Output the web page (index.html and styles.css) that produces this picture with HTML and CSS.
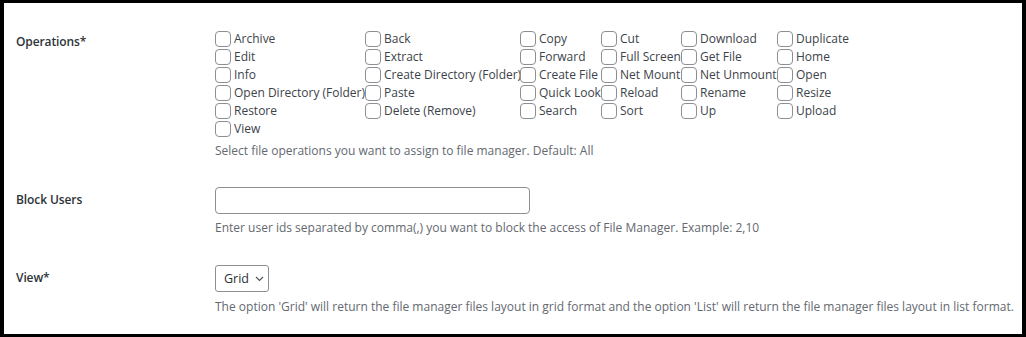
FILE: index.html
```html
<!DOCTYPE html>
<html lang="en">
<head>
<meta charset="utf-8">
<title>File Manager Settings</title>
<link rel="stylesheet" href="styles.css">
</head>
<body>
<div class="frame">
  <div class="form">
    <div class="row row-ops">
      <div class="label label-ops">Operations*</div>
      <div class="field">
        <div class="ops">
          <label class="op"><span class="cb"></span>Archive</label>
          <label class="op"><span class="cb"></span>Back</label>
          <label class="op"><span class="cb"></span>Copy</label>
          <label class="op"><span class="cb"></span>Cut</label>
          <label class="op"><span class="cb"></span>Download</label>
          <label class="op"><span class="cb"></span>Duplicate</label>
          <label class="op"><span class="cb"></span>Edit</label>
          <label class="op"><span class="cb"></span>Extract</label>
          <label class="op"><span class="cb"></span>Forward</label>
          <label class="op"><span class="cb"></span>Full Screen</label>
          <label class="op"><span class="cb"></span>Get File</label>
          <label class="op"><span class="cb"></span>Home</label>
          <label class="op"><span class="cb"></span>Info</label>
          <label class="op"><span class="cb"></span>Create Directory (Folder)</label>
          <label class="op"><span class="cb"></span>Create File</label>
          <label class="op"><span class="cb"></span>Net Mount</label>
          <label class="op"><span class="cb"></span>Net Unmount</label>
          <label class="op"><span class="cb"></span>Open</label>
          <label class="op"><span class="cb"></span>Open Directory (Folder)</label>
          <label class="op"><span class="cb"></span>Paste</label>
          <label class="op"><span class="cb"></span>Quick Look</label>
          <label class="op"><span class="cb"></span>Reload</label>
          <label class="op"><span class="cb"></span>Rename</label>
          <label class="op"><span class="cb"></span>Resize</label>
          <label class="op"><span class="cb"></span>Restore</label>
          <label class="op"><span class="cb"></span>Delete (Remove)</label>
          <label class="op"><span class="cb"></span>Search</label>
          <label class="op"><span class="cb"></span>Sort</label>
          <label class="op"><span class="cb"></span>Up</label>
          <label class="op"><span class="cb"></span>Upload</label>
          <label class="op"><span class="cb"></span>View</label>
        </div>
        <p class="desc desc-ops">Select file operations you want to assign to file manager. Default: All</p>
      </div>
    </div>

    <div class="row row-block">
      <div class="label label-box">Block Users</div>
      <div class="field">
        <div class="input"></div>
        <p class="desc desc-block">Enter user ids separated by comma(,) you want to block the access of File Manager. Example: 2,10</p>
      </div>
    </div>

    <div class="row row-view">
      <div class="label label-box">View*</div>
      <div class="field">
        <div class="select"><span>Grid</span>
          <svg class="chev" width="9" height="6" viewBox="0 0 9 6"><path d="M1 1 L4.5 4.5 L8 1" fill="none" stroke="#50575e" stroke-width="1.2"/></svg>
        </div>
        <p class="desc desc-view">The option 'Grid' will return the file manager files layout in grid format and the option 'List' will return the file manager files layout in list format.</p>
      </div>
    </div>
  </div>
</div>
</body>
</html>
```

FILE: styles.css
```css
html, body {
  margin: 0;
  padding: 0;
  background: #000;
}

.frame {
  box-sizing: border-box;
  width: 1026px;
  height: 337px;
  border-style: solid;
  border-color: #000;
  border-width: 3px 4px 3px 4px;
  background: #fff;
  overflow: hidden;
  font-family: "Open Sans", "Noto Sans", sans-serif;
  color: #3c434a;
}

.form {
  padding-left: 12px;
}

.row {
  display: grid;
  grid-template-columns: 199px 1fr;
  align-items: start;
}

.row-ops { padding-top: 27px; }
.row-block { padding-top: 27px; }
.row-view { padding-top: 28px; }

.label {
  font-size: 12px;
  font-weight: 600;
  letter-spacing: -0.1px;
  color: #2c3338;
}

.label-ops {
  margin-top: 3px;
  line-height: 18px;
}

.label-box {
  line-height: 26px;
}

.ops {
  display: grid;
  grid-template-columns: 150px 155px 81px 80px 96px auto;
  grid-auto-rows: 18px;
}

.op {
  display: flex;
  align-items: center;
  gap: 3px;
  font-size: 12px;
  line-height: 18px;
  white-space: nowrap;
  color: #3c434a;
}

.cb {
  box-sizing: border-box;
  flex: none;
  width: 16px;
  height: 16px;
  border: 1px solid #8c8f94;
  border-radius: 4px;
  background: #fff;
}

.desc {
  margin: 0;
  font-size: 12px;
  line-height: 18px;
  color: #646970;
  white-space: nowrap;
}

.desc-ops { margin-top: 4px; }
.desc-block { margin-top: 5px; }
.desc-view { margin-top: 6px; }

.input {
  box-sizing: border-box;
  width: 315px;
  height: 27px;
  border: 1px solid #8c8f94;
  border-radius: 4px;
  background: #fff;
}

.select {
  box-sizing: border-box;
  display: inline-flex;
  align-items: center;
  gap: 6px;
  height: 27px;
  width: 54px;
  padding: 0 0 0 8px;
  border: 1px solid #8c8f94;
  border-radius: 3px;
  font-size: 12.5px;
  color: #2c3338;
  background: #fff;
}

.chev {
  flex: none;
}
```
